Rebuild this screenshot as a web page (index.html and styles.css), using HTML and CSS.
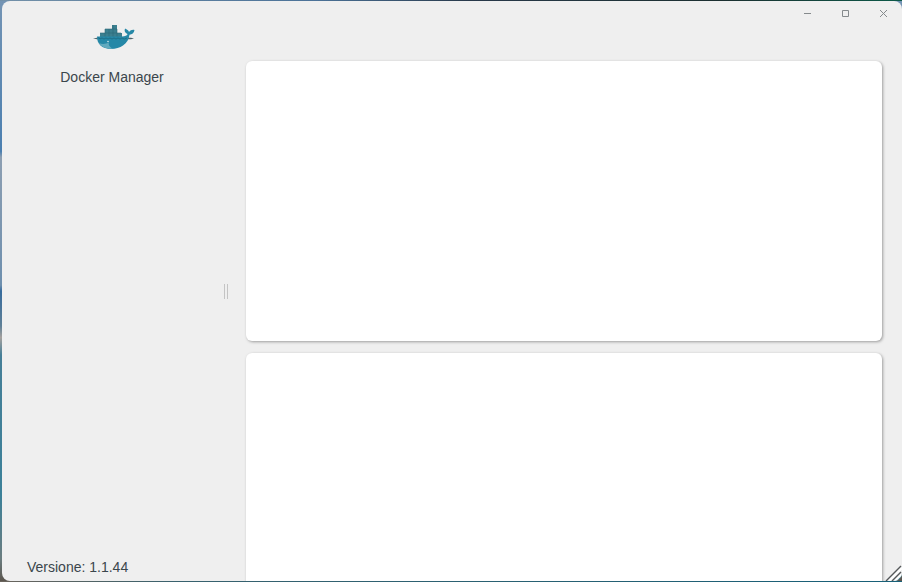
FILE: index.html
```html
<!DOCTYPE html>
<html lang="it">
<head>
  <meta charset="UTF-8">
  <meta name="viewport" content="width=device-width, initial-scale=1.0">
  <title>Docker Manager</title>
  <link rel="stylesheet" href="styles.css">
</head>
<body>

  <div class="window">

    <aside class="sidebar">
      <svg class="logo" viewBox="0 0 42 28" aria-hidden="true">
        <path d="M0 15.5 L4 14.7 H38 L41 15.5 L38 16.3 H4 Z" fill="#4d646b"/>
        <path d="M7 10h5V6h7V2h5v8h5v4H7z" fill="#3b7f8f"/>
        <path d="M7 10h21M12 6h12M12 6v8M16 6v8M20 2v12M24 6v8" stroke="#2c6878" stroke-width="0.6" fill="none"/>
        <path d="M4 13.5 H29 C32 13.5 34.5 12.5 34.5 11 C32 10 31 8 32 5.5 C34 6.5 35.5 7 36 9 C37.5 7 39.5 6.5 41.5 7 C41 10 39 11.5 36.5 11.8 C36 16 34 20 30 22.5 C24 27 12 27 7.5 22.5 C5 20 4 17 4 13.5 Z" fill="#2688a7"/>
        <path d="M6 20 C9 21.5 13 21 16 19.5 C15 22 17 24.5 20 25.7 C14 26 8 24 6 20 Z" fill="#62aabe"/>
        <path d="M5 14.5 Q7 17 9 15 Q11 17 13 15 Q15 17 17 15 Q19 17 21 15 Q23 17 25 15 Q27 17 29 15 Q31 17 34 15" stroke="#1b6880" stroke-width="0.8" fill="none"/>
        <circle cx="15" cy="18.5" r="0.8" fill="#d5e7eb"/>
      </svg>
      <h1 class="app-name">Docker Manager</h1>
      <p class="version">Versione: 1.1.44</p>
    </aside>

    <div class="splitter" role="separator" aria-orientation="vertical"></div>

    <main class="main">
      <header class="titlebar">
        <button type="button" class="win-btn" aria-label="Riduci a icona">
          <svg viewBox="0 0 9 9"><path d="M1 4.5h7"/></svg>
        </button>
        <button type="button" class="win-btn" aria-label="Ingrandisci">
          <svg viewBox="0 0 9 9"><path d="M1.5 1.5h6v6h-6z"/></svg>
        </button>
        <button type="button" class="win-btn" aria-label="Chiudi">
          <svg viewBox="0 0 9 9"><path d="M1 1l7 7M8 1l-7 7"/></svg>
        </button>
      </header>
      <div class="panels">
        <section class="panel"></section>
        <section class="panel"></section>
      </div>
    </main>

    <svg class="grip" viewBox="0 0 18 18" aria-hidden="true">
      <path d="M11 18l7-7v7z" fill="#17697f"/>
      <path d="M5 18L18 5M11 18L18 11" stroke="#fff" stroke-width="2"/>
      <path d="M2 18L17 3M8 18L17 9" stroke="#55585a" stroke-width="1.4"/>
    </svg>
  </div>

</body>
</html>
```
FILE: styles.css
```css
* {
  margin: 0;
  padding: 0;
  box-sizing: border-box;
}

body {
  height: 100vh;
  padding: 1px 0 1px 2px;
  overflow: hidden;
  font-family: "Liberation Sans", Arial, sans-serif;
  font-size: 14px;
  line-height: 18px;
  color: #3b464c;
  /* desktop behind the window: top, bottom, left edge */
  background:
    linear-gradient(to right, #7290a8, #4b7298 35%, #28394a 52%, #1b2f30 80%, #0c5948) top / 100% 1px no-repeat,
    linear-gradient(to right, #6b655d, #38616e 20%, #176078) bottom / 100% 1px no-repeat,
    linear-gradient(#7494b4, #4b7fb0 26%, #8d9fb2 27%, #6e8fae 49%, #386c9d 50%, #5f8097 56%, #a5a19e 58%, #467f98 61%, #3c8199 85%, #6b7d80 96%, #5a534b);
}

/* Window */
.window {
  position: relative;
  display: grid;
  grid-template-columns: 220px 8px 1fr;
  height: 100%;
  overflow: hidden;
  background: #efefef;
  border-radius: 8px;
}

/* Sidebar */
.sidebar {
  display: flex;
  flex-direction: column;
  align-items: center;
  padding: 22px 0 5px;
}

.logo {
  width: 42px;
  height: 28px;
  margin-left: 4px;
}

.app-name {
  margin-top: 17px;
  font-size: 14px;
  font-weight: normal;
}

.version {
  align-self: flex-start;
  margin-top: auto;
  padding-left: 25px;
}

/* Splitter */
.splitter {
  align-self: center;
  justify-self: center;
  width: 4px;
  height: 15px;
  border: solid #c4c4c4;
  border-width: 0 1px;
  cursor: col-resize;
}

/* Main */
.main {
  display: flex;
  flex-direction: column;
  min-height: 0;
}

.titlebar {
  display: flex;
  justify-content: flex-end;
}

.win-btn {
  display: flex;
  align-items: center;
  justify-content: center;
  width: 38px;
  height: 25px;
  border: 0;
  background: transparent;
}

.win-btn svg {
  width: 9px;
  height: 9px;
  fill: none;
  stroke: #858a8c;
}

.panels {
  flex: 1;
  display: flex;
  flex-direction: column;
  gap: 12px;
  min-height: 0;
  padding: 35px 20px 0 16px;
  overflow: hidden;
}

.panel {
  flex: none;
  height: 280px;
  background: #fff;
  border-radius: 6px;
  box-shadow: 1px 1px 3px rgba(0, 0, 0, 0.35);
}

/* Resize grip, over the bottom right corner */
.grip {
  position: absolute;
  right: 0;
  bottom: 0;
  width: 18px;
  height: 18px;
  cursor: nwse-resize;
}
```
